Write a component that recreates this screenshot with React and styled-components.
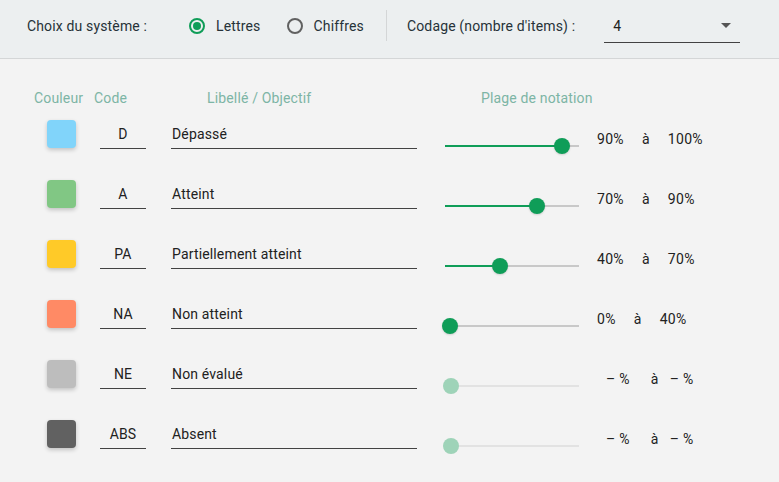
import React from 'react';
import styled, { createGlobalStyle } from 'styled-components';

const GREEN = '#0f9d58';

const GlobalStyle = createGlobalStyle`
  html, body {
    margin: 0;
    padding: 0;
    background: #f3f3f3;
    font-family: Roboto, "Noto Sans", sans-serif;
    font-size: 14px;
    letter-spacing: 0.15px;
    color: #212121;
  }
`

const Page = styled.div`
  width: 779px;
  height: 482px;
  background: #f3f3f3;
  overflow: hidden;
`

const Toolbar = styled.div`
  display: flex;
  align-items: center;
  height: 31px;
  padding: 10px 0 17px 27px;
  background: #eceff0;
  border-bottom: 1px solid #d4d6d7;
`

const ToolLabel = styled.span`
  color: #263238;
  margin-right: ${p => p.$gap || 0}px;
`

const RadioOption = styled.label`
  display: flex;
  align-items: center;
  gap: 11px;
  margin-right: ${p => p.$gap || 0}px;
  color: #263238;
`

const RadioCircle = styled.span`
  box-sizing: border-box;
  width: 16px;
  height: 16px;
  border-radius: 50%;
  border: 2px solid ${p => (p.$checked ? GREEN : '#616161')};
  display: flex;
  align-items: center;
  justify-content: center;
  &::after {
    content: '';
    width: 8px;
    height: 8px;
    border-radius: 50%;
    background: ${GREEN};
    display: ${p => (p.$checked ? 'block' : 'none')};
  }
`

const Divider = styled.span`
  width: 1px;
  height: 31px;
  background: #d4d6d7;
  margin: 0 20px 0 0;
`

const Select = styled.div`
  box-sizing: border-box;
  width: 136px;
  height: 33px;
  display: flex;
  align-items: center;
  justify-content: space-between;
  padding: 0 9px 0 9px;
  border-bottom: 1px solid #424242;
  margin-top: 1px;
  color: #212121;
`

const Caret = styled.span`
  width: 0;
  height: 0;
  border-left: 5px solid transparent;
  border-right: 5px solid transparent;
  border-top: 5px solid #555;
`

const HeadRow = styled.div`
  display: grid;
  grid-template-columns: 60px 113px 274px auto;
  padding: 33px 0 0 34px;
  height: 12px;
  line-height: 12px;
  color: #7db5a5;
`

const Rows = styled.div`
  display: flex;
  flex-direction: column;
`

const Row = styled.div`
  display: flex;
  align-items: center;
  height: 60px;
  padding-left: 47px;
`

const Swatch = styled.div`
  width: 29px;
  height: 28px;
  border-radius: 4px;
  background: ${p => p.$color};
  box-shadow: 0 2px 4px rgba(0, 0, 0, 0.2);
  margin-right: 24px;
`

const Field = styled.div`
  box-sizing: border-box;
  width: ${p => p.$width}px;
  height: 30px;
  display: flex;
  align-items: center;
  justify-content: ${p => (p.$center ? 'center' : 'flex-start')};
  padding-left: ${p => (p.$center ? 0 : 1)}px;
  border-bottom: 1px solid #424242;
  margin: 0 ${p => p.$after}px 0 0;
  color: #212121;
`

const Slider = styled.div`
  position: relative;
  width: 134px;
  height: 16px;
  margin: 24px 18px 0 0;
`

const Track = styled.div`
  position: absolute;
  left: 0;
  right: 0;
  top: 7px;
  height: 2px;
  background: ${p => (p.$disabled ? '#e2e2e2' : '#c8c8c8')};
`

const Fill = styled.div`
  position: absolute;
  left: 0;
  top: 7px;
  height: 2px;
  background: ${GREEN};
`

const Thumb = styled.div`
  position: absolute;
  top: 0;
  width: 16px;
  height: 16px;
  margin-left: -8px;
  border-radius: 50%;
  background: ${p => (p.$disabled ? '#9ed3b8' : GREEN)};
  box-shadow: ${p => (p.$disabled ? 'none' : '0 1px 2px rgba(0,0,0,0.15)')};
`

const Range = styled.div`
  display: flex;
  align-items: center;
  gap: ${p => (p.$empty ? '0' : '18px')};
  margin-top: 10px;
  padding-left: ${p => (p.$empty ? 9 : 0)}px;
  letter-spacing: 0.3px;
  color: #212121;
`

const Word = styled.span`
  margin: ${p => p.$m || '0'};
`

const items = [
  { color: '#81d4fa', code: 'D', label: 'Dépassé', from: 90, to: 100 },
  { color: '#81c784', code: 'A', label: 'Atteint', from: 70, to: 90 },
  { color: '#ffca28', code: 'PA', label: 'Partiellement atteint', from: 40, to: 70 },
  { color: '#ff8a65', code: 'NA', label: 'Non atteint', from: 0, to: 40 },
  { color: '#bdbdbd', code: 'NE', label: 'Non évalué', from: null, to: null },
  { color: '#616161', code: 'ABS', label: 'Absent', from: null, to: null },
];

// thumb travels from 5px to 129px of the 134px track
const thumbPos = v => 5 + (v / 100) * 124;

const Item = ({ item }) => {
  const empty = item.from === null;
  const pos = thumbPos(empty ? 0 : item.from);
  return (
    <Row>
      <Swatch $color={item.color} />
      <Field $width={46} $after={25} $center>{item.code}</Field>
      <Field $width={246} $after={28}>{item.label}</Field>
      <Slider>
        <Track $disabled={empty} />
        {!empty && <Fill style={{ width: pos }} />}
        <Thumb $disabled={empty} style={{ left: empty ? 6 : pos }} />
      </Slider>
      {empty ? (
        <Range $empty>
          <Word>– %</Word>
          <Word $m="0 0 0 21px">à</Word>
          <Word $m="0 0 0 11px">– %</Word>
        </Range>
      ) : (
        <Range>
          <span>{item.from}%</span>
          <span>à</span>
          <span>{item.to}%</span>
        </Range>
      )}
    </Row>
  );
};

const App = () => {
  return (
    <Page>
      <GlobalStyle />
      <Toolbar>
        <ToolLabel $gap={42}>Choix du système :</ToolLabel>
        <RadioOption $gap={26}>
          <RadioCircle $checked />
          Lettres
        </RadioOption>
        <RadioOption $gap={22}>
          <RadioCircle />
          Chiffres
        </RadioOption>
        <Divider />
        <ToolLabel $gap={29}>Codage (nombre d'items) :</ToolLabel>
        <Select>
          <span>4</span>
          <Caret />
        </Select>
      </Toolbar>
      <HeadRow>
        <span>Couleur</span>
        <span>Code</span>
        <span>Libellé / Objectif</span>
        <span>Plage de notation</span>
      </HeadRow>
      <Rows>
        {items.map(it => (
          <Item key={it.code} item={it} />
        ))}
      </Rows>
    </Page>
  );
};

export default App;
